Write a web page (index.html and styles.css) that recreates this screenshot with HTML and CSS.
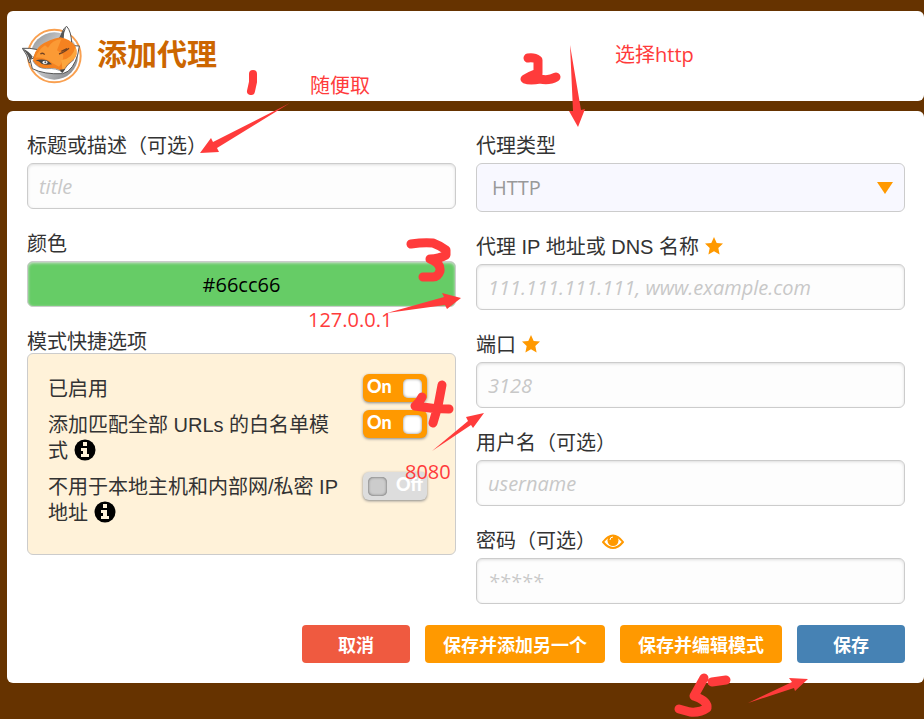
FILE: index.html
```html
<!DOCTYPE html>
<html lang="zh-CN">
<head>
<meta charset="utf-8">
<title>添加代理</title>
<link rel="stylesheet" href="styles.css">
</head>
<body>
<header class="card masthead">
  <svg class="logo" viewBox="66 78 180 180" aria-hidden="true">
    <defs>
      <linearGradient id="disc" x1="0" y1="0" x2="1" y2="1">
        <stop offset="0" stop-color="#8b8d8f"/><stop offset=".45" stop-color="#d0d1d3"/><stop offset="1" stop-color="#77797c"/>
      </linearGradient>
    </defs>
    <circle cx="163" cy="168" r="79" fill="#fff" stroke="#f9a050" stroke-width="6"/>
    <circle cx="163" cy="168" r="71" fill="url(#disc)"/>
    <path d="M67 145Q88 143 114 149L101 172L88 189Q82 163 67 145Z" fill="#fff" stroke="#555" stroke-width="3"/>
    <path d="M67 145Q86 165 90 185L98 170Q88 155 67 145Z" fill="#555"/>
    <path d="M183 118Q184 88 200 79Q214 94 215 130Z" fill="#fff" stroke="#555" stroke-width="3"/>
    <path d="M176 116Q184 98 199 80Q190 98 191 118Z" fill="#555"/>
    <path d="M90 178L97 206Q132 224 188 221L204 214Q232 190 238 138L220 137Z" fill="#fff" stroke="#555" stroke-width="3"/>
    <path d="M99 182Q102 153 122 136Q148 118 181 112Q210 117 226 138Q237 164 220 180Q204 192 188 216Q167 200 140 205Q112 205 99 182Z" fill="#f58220"/>
    <path d="M144 143Q155 121 184 117L171 151L190 164Q190 186 177 200L158 190Q135 171 106 173Q117 148 135 136Z" fill="#fb9a35"/>
    <path d="M184 180Q218 177 226 141Q235 167 217 181Q201 192 188 215Z" fill="#fca63d"/>
    <path d="M98 182Q112 206 140 206Q170 203 187 217Q201 192 222 179" fill="none" stroke="#666" stroke-width="2"/>
    <path d="M107 181Q125 176 143 182L156 193Q137 196 126 192Q118 183 107 181Z" fill="#444"/>
    <ellipse cx="135" cy="187" rx="8" ry="5" fill="#fff"/><circle cx="136" cy="187" r="3" fill="#555"/>
    <path d="M177 162Q190 159 207 145M184 154L201 146M121 162Q129 157 134 164" fill="none" stroke="#734322" stroke-width="4"/>
    <path d="M179 209L196 207L187 219Z" fill="#444"/>
  </svg>
  <h1>添加代理</h1>
</header>

<form class="card">
  <div class="columns">
    <div class="column">
      <div class="field">
        <label for="title">标题或描述（可选）</label>
        <input id="title" type="text" placeholder="title">
      </div>
      <div class="field">
        <label for="color">颜色</label>
        <input id="color" class="color" type="text" value="#66cc66">
      </div>
      <div class="shortcuts" role="group" aria-labelledby="shortcuts-title">
        <div id="shortcuts-title" class="group-title">模式快捷选项</div>
        <div class="options">
          <div class="option">
            <label for="enabled">已启用</label>
            <div class="switch"><input id="enabled" type="checkbox" checked><span>On</span></div>
          </div>
          <div class="option">
            <label for="whitelist">添加匹配全部 URLs 的白名单模式 <svg class="info" viewBox="0 0 22 22"><circle cx="11" cy="11" r="10.500"/><path d="M9 3h4v4H9zM7 9h6v6h2v3H7v-3h2v-3H7z"/></svg></label>
            <div class="switch"><input id="whitelist" type="checkbox" checked><span>On</span></div>
          </div>
          <div class="option">
            <label for="local">不用于本地主机和内部网/私密 IP 地址 <svg class="info" viewBox="0 0 22 22"><circle cx="11" cy="11" r="10.500"/><path d="M9 3h4v4H9zM7 9h6v6h2v3H7v-3h2v-3H7z"/></svg></label>
            <div class="switch"><input id="local" type="checkbox"><span>Off</span></div>
          </div>
        </div>
      </div>
    </div>

    <div class="column">
      <div class="field">
        <label for="type">代理类型</label>
        <div class="select">
          <select id="type"><option>HTTP</option></select>
          <svg viewBox="0 0 16 12" aria-hidden="true"><path d="M0 0H16L8 12Z"/></svg>
        </div>
      </div>
      <div class="field">
        <label for="address">代理 IP 地址或 DNS 名称 <svg class="star" viewBox="0 0 18 18"><path d="M9 0L11.700 6L18 6.600L13.300 11L14.600 17.600L9 14.300L3.400 17.600L4.700 11L0 6.600L6.300 6Z"/></svg></label>
        <input id="address" type="text" placeholder="111.111.111.111, www.example.com">
      </div>
      <div class="field">
        <label for="port">端口 <svg class="star" viewBox="0 0 18 18"><path d="M9 0L11.700 6L18 6.600L13.300 11L14.600 17.600L9 14.300L3.400 17.600L4.700 11L0 6.600L6.300 6Z"/></svg></label>
        <input id="port" type="text" placeholder="3128">
      </div>
      <div class="field">
        <label for="username">用户名（可选）</label>
        <input id="username" type="text" placeholder="username">
      </div>
      <div class="field">
        <label for="password">密码（可选） <svg class="eye" viewBox="0 0 22 16"><path d="M1 8Q11-5 21 8Q11 20 1 8Z" fill="none" stroke="#f90" stroke-width="2"/><circle cx="11" cy="6.500" r="5.500" fill="#f90"/><path d="M8 6Q8 3 11 3" fill="none" stroke="#fff"/></svg></label>
        <input id="password" type="password" placeholder="*****">
      </div>
    </div>
  </div>
  <div class="actions">
    <button class="cancel" type="button">取消</button>
    <button type="button">保存并添加另一个</button>
    <button type="button">保存并编辑模式</button>
    <button class="save" type="submit">保存</button>
  </div>
</form>

<svg class="notes" width="924" height="719" viewBox="0 0 924 719">
  <g class="ink">
    <path d="M253 74L253 82L251 91" stroke-width="8"/>
    <path d="M528 58Q534 57 538 60L538 73Q530 76 525 79Q530 81 540 79Q549 81 556 77"/>
    <path d="M411 244Q424 242 433 243Q441 246 446 250L446 255Q439 259 430 259Q441 263 440 271Q438 277 433 277L423 277"/>
    <path d="M422 397Q419 403 415 406Q432 409 449 409M442 385L438 406L433 423"/>
    <path d="M704 678L694 696Q708 701 707 708Q700 713 690 712L679 709M712 682L726 680"/>
  </g>
  <g class="arrows">
    <path d="M290 103L213 142L211 138L200 153L219 152L217 148Z"/>
    <path d="M570 45L573 111L569 111L578 127L585 109L581 110Z"/>
    <path d="M387 313L444 297L442 293L461 298L447 309L445 305Z"/>
    <path d="M432 451L468 421L466 417L484 413L473 428L471 425Z"/>
    <path d="M748 703L792 682L789 678L808 679L795 691L794 688Z"/>
  </g>
  <g class="words">
    <text x="310" y="93">随便取</text>
    <text x="615" y="62">选择http</text>
    <text x="308" y="327">127.0.0.1</text>
    <text x="405" y="479">8080</text>
  </g>
</svg>
</body>
</html>
```
FILE: styles.css
```css
* { box-sizing: border-box; }

body {
  position: relative;
  margin: 0;
  padding: 11px 0 36px 7px;
  background: #630;
  color: #333;
  font: 20px/26px "Liberation Sans", "Noto Sans CJK SC", sans-serif;
}

.card {
  padding: 20px 19px 20px 20px;
  border-radius: 6px;
  background: #fff;
}

.masthead {
  display: flex;
  align-items: center;
  gap: 15px;
  margin-bottom: 10px;
  padding: 15px;
}

.logo { width: 60px; height: 60px; }

h1 {
  margin: 0;
  padding-bottom: 2px;
  color: #c60;
  font-size: 30px;
  line-height: 40px;
}

.columns {
  display: grid;
  grid-template-columns: 1fr 1fr;
  gap: 20px;
}

.column {
  display: flex;
  flex-direction: column;
  gap: 20px;
}

.field {
  display: flex;
  flex-direction: column;
  gap: 4px;
}

.field label,
.group-title { padding-top: 2px; }

.field input,
.select select {
  width: 100%;
  height: 46px;
  border: 1px solid #ccc;
  border-radius: 6px;
  padding: 0 11px;
  background: #fdfdfd;
  box-shadow: inset 0 1px 3px #ddd;
  color: #000;
  font: 20px "Open Sans", "Noto Sans CJK SC", sans-serif;
}

.field input::placeholder {
  color: #c8c8c8;
  opacity: 1;
  font-style: italic;
}

.field .color {
  background: #6c6;
  text-align: center;
}

.select { display: grid; align-items: center; }

.select select {
  grid-area: 1 / 1;
  height: 49px;
  padding: 0 15px;
  appearance: none;
  background: #f8f8ff;
  box-shadow: none;
  color: #999;
}

.select svg {
  grid-area: 1 / 1;
  justify-self: end;
  width: 16px;
  height: 12px;
  margin-right: 12px;
  fill: #f90;
  pointer-events: none;
}

.star { width: 18px; height: 18px; vertical-align: -1px; fill: #f90; }
.eye { width: 22px; height: 16px; vertical-align: -2px; }
.info { width: 22px; height: 22px; vertical-align: -3px; }
.info path { fill: #fff2d9; }

.options {
  display: flex;
  flex-direction: column;
  gap: 8px;
  margin-top: -2px;
  padding: 20px 20px 28px;
  border: 1px solid #ccc;
  border-radius: 6px;
  background: #fff2d9;
}

.option {
  display: grid;
  grid-template-columns: 1fr 72px;
  gap: 20px;
  align-items: start;
}

.option label { padding-top: 2px; }

.switch { display: grid; width: 64px; }

.switch input {
  grid-area: 1 / 1;
  display: flex;
  align-items: center;
  justify-content: flex-end;
  width: 64px;
  height: 28px;
  margin: 0;
  padding: 0 5px;
  appearance: none;
  border-radius: 6px;
  background: #f90;
  box-shadow: 0 1px 3px #888;
}

.switch input::before {
  content: "";
  width: 19px;
  height: 19px;
  border-radius: 5px;
  background: #fff;
  box-shadow: inset 0 0 3px #888;
}

.switch span {
  grid-area: 1 / 1;
  padding: 0 4px;
  color: #fff;
  font: 900 18px/24px Lato, sans-serif;
  pointer-events: none;
}

.switch input:not(:checked) { justify-content: flex-start; background: #ddd; }
.switch input:not(:checked)::before { background: #ccc; box-shadow: inset 0 0 3px #555; }
.switch input:not(:checked) + span { text-align: right; }

.actions {
  display: flex;
  flex-wrap: wrap;
  justify-content: flex-end;
  gap: 15px;
  margin-top: 21px;
}

button {
  min-width: 108px;
  height: 38px;
  padding: 0 18px;
  border: 0;
  border-radius: 4px;
  background: #f90;
  color: #fff;
  font: bold 18px "Liberation Sans", "Noto Sans CJK SC", sans-serif;
}

.cancel { background: #ef5a40; }
.save { background: #4682b4; }

.notes {
  position: absolute;
  top: 0;
  left: 0;
  pointer-events: none;
}

.ink {
  fill: none;
  stroke: #ff3b3b;
  stroke-width: 9px;
  stroke-linecap: round;
  stroke-linejoin: round;
}

.arrows { fill: #ff3b3b; }

.words {
  fill: #ff3b3b;
  font: 20px "Open Sans", "Noto Sans CJK SC", sans-serif;
}
```
